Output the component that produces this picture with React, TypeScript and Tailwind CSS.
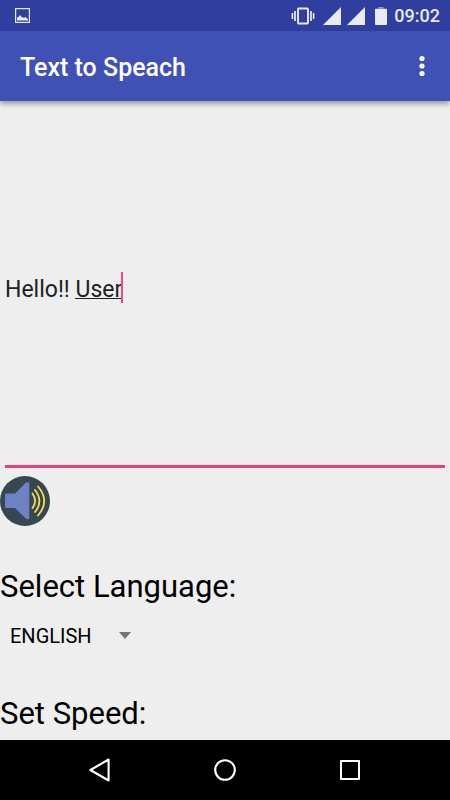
import { useState } from "react";

function StatusBar() {
  return (
    <div className="flex h-[31px] shrink-0 items-center justify-between bg-[#303f9f] pr-[10px] pl-[15px] text-[#e8eaf6]">
      <svg className="size-[15px]" viewBox="0 0 15 15" fill="none" aria-hidden="true">
        <rect x="0.6" y="0.6" width="13.8" height="13.8" stroke="currentColor" strokeWidth="1.2" />
        <path d="M2 12.5V9.5L3.5 9L5 7L7 9.3L9 9.8L10.5 9L13 11.3V12.5Z" fill="currentColor" />
      </svg>
      <div className="flex items-center">
        <svg className="h-[18px] w-[24px]" viewBox="0 0 24 18" fill="none" stroke="currentColor" aria-hidden="true">
          <rect x="7" y="1.5" width="10" height="15" rx="0.8" strokeWidth="1.9" />
          <path d="M4 4V14M20 4V14" strokeWidth="1.7" />
          <path d="M1.4 6V12M22.6 6V12" strokeWidth="1.6" />
        </svg>
        <svg className="ml-[8px] size-[18px]" viewBox="0 0 18 18" fill="currentColor" aria-hidden="true">
          <path d="M18 0V18H0Z" />
        </svg>
        <svg className="ml-[6px] size-[18px]" viewBox="0 0 18 18" fill="currentColor" aria-hidden="true">
          <path d="M18 0V18H0Z" />
        </svg>
        <svg className="ml-[10px] h-[18px] w-[12px]" viewBox="0 0 12 18" fill="currentColor" aria-hidden="true">
          <path d="M3.5 0H8.5V1.6H3.5Z" opacity="0.55" />
          <path d="M0.8 1.8H11.2Q12 1.8 12 2.6V17.2Q12 18 11.2 18H0.8Q0 18 0 17.2V2.6Q0 1.8 0.8 1.8Z" />
        </svg>
        <span className="ml-[7px] text-lg leading-6 font-medium">09:02</span>
      </div>
    </div>
  );
}

function AppBar() {
  return (
    <header className="relative z-10 flex h-[70px] shrink-0 items-center justify-between bg-[#3f51b5] pr-[12px] pl-[20px] text-white shadow-[0_3px_5px_rgba(0,0,0,0.35)]">
      <h1 className="pt-[3px] text-[25px] leading-8 font-medium">Text to Speach</h1>
      <button type="button" aria-label="More options" className="flex h-10 w-8 items-center justify-center">
        <svg className="h-[22px] w-[6px]" viewBox="0 0 6 22" fill="currentColor" aria-hidden="true">
          <circle cx="3" cy="3.5" r="2.6" />
          <circle cx="3" cy="11" r="2.6" />
          <circle cx="3" cy="18.5" r="2.6" />
        </svg>
      </button>
    </header>
  );
}

function SpeakerIcon() {
  return (
    <svg className="size-[50px]" viewBox="0 0 50 50" aria-hidden="true">
      <circle cx="25" cy="25" r="25" fill="#37474f" />
      <path
        d="M6 17.5H15L25.5 7Q27 5.8 28.5 6.3Q29.3 6.6 29.3 8V41.5Q29.3 43 28 43.2Q26.5 43.2 25.5 42.2L15 32H6Q5 32 5 31V18.5Q5 17.5 6 17.5Z"
        fill="#7080c4"
      />
      <g fill="none" stroke="#f4da55" strokeWidth="1.8" strokeLinecap="round">
        <path d="M32.5 17.5Q37.8 25 32.5 32" />
        <path d="M35 14Q43.8 25 35 36" />
        <path d="M38 10.5Q50.5 25 38 39.5" />
      </g>
    </svg>
  );
}

function NavigationBar() {
  return (
    <nav className="flex h-[60px] shrink-0 items-center justify-center gap-[77px] bg-black text-white" aria-label="System">
      <button type="button" aria-label="Back" className="flex size-12 items-center justify-center">
        <svg className="size-6" viewBox="0 0 24 24" fill="none" stroke="currentColor" strokeWidth="2.1" strokeLinejoin="round" aria-hidden="true">
          <path d="M20.6 1.5V22.5L2.4 12Z" />
        </svg>
      </button>
      <button type="button" aria-label="Home" className="flex size-12 items-center justify-center">
        <svg className="size-6" viewBox="0 0 24 24" fill="none" stroke="currentColor" strokeWidth="2.1" aria-hidden="true">
          <circle cx="12" cy="12" r="9.8" />
        </svg>
      </button>
      <button type="button" aria-label="Recent apps" className="flex size-12 items-center justify-center">
        <svg className="size-6" viewBox="0 0 24 24" fill="none" stroke="currentColor" strokeWidth="2" strokeLinejoin="round" aria-hidden="true">
          <rect x="3" y="3" width="18" height="18" />
        </svg>
      </button>
    </nav>
  );
}

export default function App() {
  const [text, setText] = useState("Hello!! User");
  const [language, setLanguage] = useState("ENGLISH");

  return (
    <div className="flex h-screen flex-col bg-[#eeeeee] font-['Roboto',sans-serif]">
      <StatusBar />
      <AppBar />
      <main className="flex-1 overflow-hidden text-black">
        <div className="relative mx-[5px] mt-[10px]">
          <input
            type="text"
            aria-label="Text to speak"
            value={text}
            onChange={(event) => setText(event.target.value)}
            className="block h-[357px] w-full border-b-3 border-[#e83e80] bg-transparent pt-[2px] text-[23px] text-[#212121] outline-none"
          />
          {/* Composing underline and text cursor */}
          <span className="absolute top-[187px] left-[70px] h-px w-[46px] bg-[#212121]" />
          <span className="absolute top-[161px] left-[116px] h-[31px] w-[2px] bg-[#ff4081]" />
        </div>
        <button type="button" aria-label="Speak" className="mt-[8px] block rounded-full">
          <SpeakerIcon />
        </button>
        <label htmlFor="language" className="mt-[41px] block text-[31px] leading-10">
          Select Language:
        </label>
        <div className="relative mt-[4px] w-[140px]">
          <select
            id="language"
            value={language}
            onChange={(event) => setLanguage(event.target.value)}
            className="block h-[50px] w-full appearance-none bg-transparent pl-[10px] text-xl outline-none"
          >
            <option>ENGLISH</option>
          </select>
          <svg className="pointer-events-none absolute top-[21px] right-[9px] h-[7px] w-[12px]" viewBox="0 0 12 7" fill="#737373" aria-hidden="true">
            <path d="M0 0H12L6 7Z" />
          </svg>
        </div>
        <h2 className="mt-[33px] text-[31px] leading-10">Set Speed:</h2>
      </main>
      <NavigationBar />
    </div>
  );
}
